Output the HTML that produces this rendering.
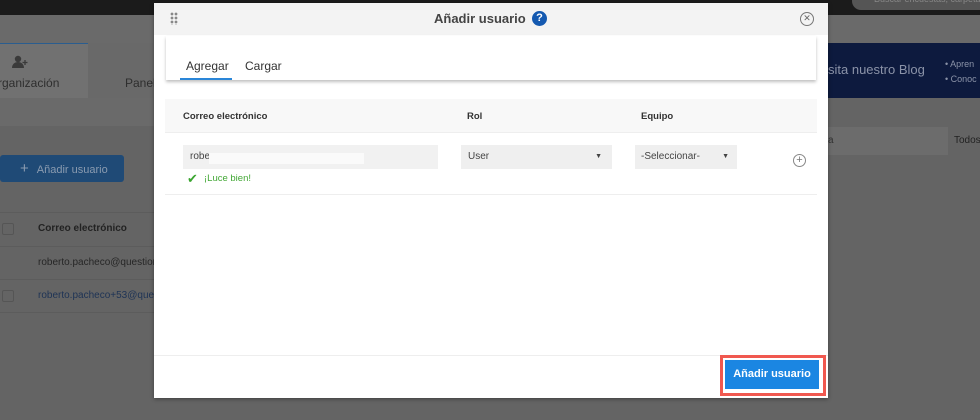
<!DOCTYPE html>
<html><head><meta charset="utf-8"><style>
*{margin:0;padding:0;box-sizing:border-box}
body{width:980px;height:420px;overflow:hidden;background:#646464;font-family:"Liberation Sans",sans-serif;position:relative;font-size:11px}
.a{position:absolute;white-space:nowrap}
</style></head><body>
<div class="a" style="left:0;top:0;width:980px;height:15px;background:#1b1b1b"></div>
<div class="a" style="left:852px;top:-8px;width:140px;height:18px;border-radius:9px;background:#555;color:#888;font-size:9px;padding:0 0 0 22px;line-height:14px;overflow:hidden">Buscar encuestas, carpetas</div>
<div class="a" style="left:0;top:15px;width:980px;height:28px;background:#6a6a6a"></div>
<div class="a" style="left:0;top:43px;width:88px;height:55px;background:#717171;border-top:1px solid #2a5d8f"></div>
<div class="a" style="left:88px;top:43px;width:66px;height:55px;background:#696969"></div>
<svg class="a" style="left:11px;top:55px" width="20" height="14" viewBox="0 0 20 14"><circle cx="7" cy="4" r="3.2" fill="#3a3a3a"/><path d="M1 13c0-4 3-6 6-6s6 2 6 6z" fill="#3a3a3a"/><path d="M14 5v5M11.5 7.5h5" stroke="#3a3a3a" stroke-width="1.3"/></svg>
<div class="a" style="left:-2px;top:76px;color:#2e2e2e;font-size:12px">rganización</div>
<div class="a" style="left:125px;top:76px;color:#2e2e2e;font-size:12px">Panel</div>
<div class="a" style="left:0;top:98px;width:154px;height:28px;background:#6a6a6a"></div>
<div class="a" style="left:0;top:155px;width:124px;height:27px;background:#1f4a76;border-radius:3px;color:#8a9bb0;font-size:11px;line-height:27px;padding-left:20px"><span style="font-size:15px;margin-right:8px">+</span>Añadir usuario</div>
<div class="a" style="left:0;top:212px;width:154px;height:1px;background:#5c5c5c"></div>
<div class="a" style="left:2px;top:223px;width:12px;height:12px;border:1px solid #555;border-radius:2px"></div>
<div class="a" style="left:38px;top:223px;color:#222;font-size:10px;font-weight:bold">Correo electrónico</div>
<div class="a" style="left:0;top:246px;width:154px;height:1px;background:#5c5c5c"></div>
<div class="a" style="left:38px;top:257px;color:#262626;font-size:10px">roberto.pacheco@questionp</div>
<div class="a" style="left:0;top:279px;width:154px;height:1px;background:#5c5c5c"></div>
<div class="a" style="left:2px;top:290px;width:12px;height:12px;border:1px solid #555;border-radius:2px"></div>
<div class="a" style="left:38px;top:290px;color:#1e3355;font-size:10px">roberto.pacheco+53@questio</div>
<div class="a" style="left:0;top:312px;width:154px;height:1px;background:#5c5c5c"></div>
<div class="a" style="left:828px;top:43px;width:152px;height:55px;background:#0d1a3e"></div>
<div class="a" style="left:828px;top:62px;color:#8b93a8;font-size:13px">sita nuestro Blog</div>
<div class="a" style="left:945px;top:57px;color:#8b93a8;font-size:9px;line-height:15px">• Apren<br>• Conoc</div>
<div class="a" style="left:828px;top:127px;width:120px;height:28px;background:#6c6c6c;color:#333;font-size:10px;line-height:28px">a</div>
<div class="a" style="left:954px;top:135px;color:#222;font-size:10px">Todos</div>
<!-- modal -->
<div class="a" style="left:154px;top:3px;width:674px;height:395px;background:#fff;box-shadow:0 1px 4px rgba(0,0,0,.4)">
 <div class="a" style="left:0;top:0;width:674px;height:32px;background:#f3f3f3"></div>
 <div class="a" style="left:16px;top:9px;width:8px;height:13px;background:radial-gradient(circle,#888 1.2px,transparent 1.6px) 0 0/4px 4px"></div>
 <div class="a" style="left:280px;top:8px;font-size:13px;font-weight:bold;color:#444">Añadir usuario</div>
 <div class="a" style="left:378px;top:8px;width:15px;height:15px;border-radius:50%;background:#1459b0;color:#fff;font-weight:bold;font-size:11px;text-align:center;line-height:15px">?</div>
 <div class="a" style="left:646px;top:9px;width:14px;height:14px;border:1.3px solid #777;border-radius:50%;color:#666;font-size:9px;text-align:center;line-height:11px">✕</div>
 <div class="a" style="left:12px;top:33px;width:650px;height:44px;background:#fff;box-shadow:0 2px 3px rgba(0,0,0,.25)"></div>
 <div class="a" style="left:32px;top:56px;font-size:12px;color:#333">Agregar</div>
 <div class="a" style="left:26px;top:75px;width:52px;height:2px;background:#2a86d8"></div>
 <div class="a" style="left:91px;top:56px;font-size:12px;color:#333">Cargar</div>
 <div class="a" style="left:11px;top:96px;width:652px;height:34px;background:#f8f8f8;border-bottom:1px solid #eee"></div>
 <div class="a" style="left:29px;top:108px;font-size:9.5px;font-weight:bold;color:#333">Correo electrónico</div>
 <div class="a" style="left:313px;top:108px;font-size:9.5px;font-weight:bold;color:#333">Rol</div>
 <div class="a" style="left:487px;top:108px;font-size:9.5px;font-weight:bold;color:#333">Equipo</div>
 <div class="a" style="left:29px;top:142px;width:255px;height:24px;background:#f1f1f1;font-size:10px;color:#444;line-height:24px;padding-left:7px">robe</div>
 <div class="a" style="left:55px;top:150px;width:155px;height:11px;background:#fafafa"></div>
 <div class="a" style="left:33px;top:168px;color:#3aa52f;font-size:13px">✔</div>
 <div class="a" style="left:50px;top:170px;color:#43a836;font-size:9.5px">¡Luce bien!</div>
 <div class="a" style="left:307px;top:142px;width:151px;height:24px;background:#efefef;font-size:10px;color:#444;line-height:24px;padding-left:7px">User<span style="position:absolute;right:10px;font-size:7px">▼</span></div>
 <div class="a" style="left:481px;top:142px;width:102px;height:24px;background:#efefef;font-size:10px;color:#444;line-height:24px;padding-left:6px">-Seleccionar-<span style="position:absolute;right:8px;font-size:7px">▼</span></div>
 <div class="a" style="left:639px;top:151px;width:13px;height:13px;border:1px solid #888;border-radius:50%;color:#777;font-size:11px;text-align:center;line-height:10px">+</div>
 <div class="a" style="left:11px;top:191px;width:652px;height:1px;background:#eee"></div>
 <div class="a" style="left:0;top:352px;width:674px;height:1px;background:#eee"></div>
 <div class="a" style="left:566px;top:352px;width:106px;height:41px;border:3px solid #f0584f;background:#fff"></div>
 <div class="a" style="left:571px;top:357px;width:94px;height:29px;background:#1b86e2;color:#fff;font-size:11px;font-weight:bold;text-align:center;line-height:29px">Añadir usuario</div>
</div>
</body></html>
